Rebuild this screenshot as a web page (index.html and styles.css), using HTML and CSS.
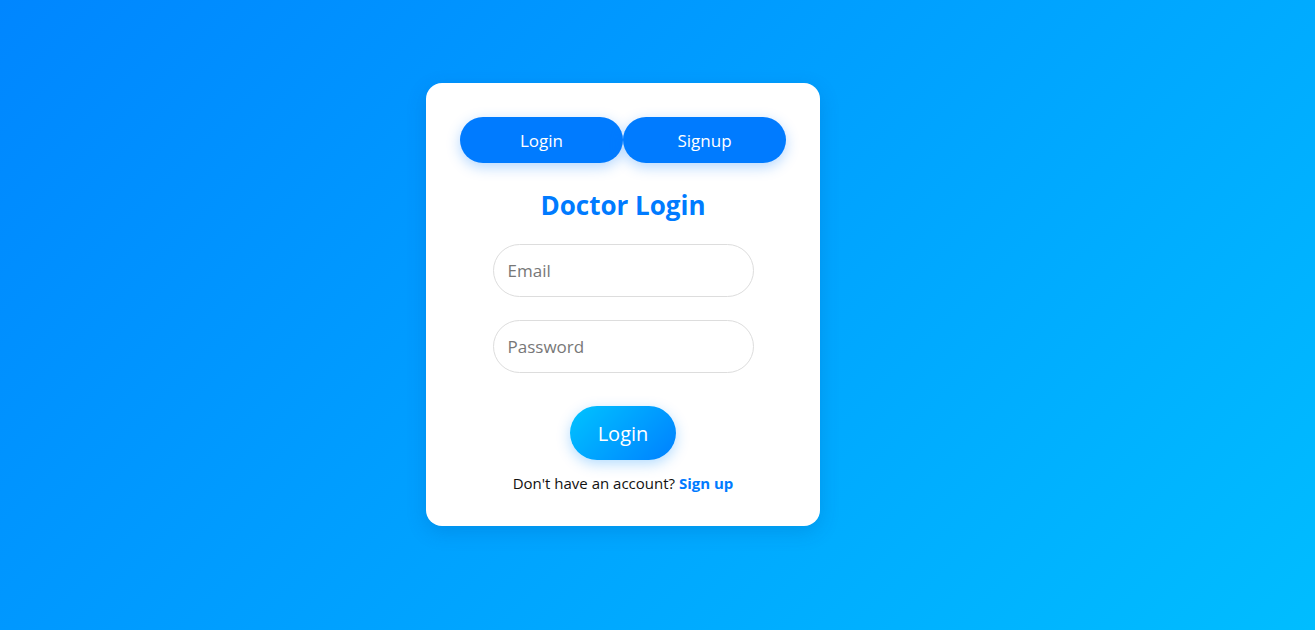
FILE: index.html
```html
<!DOCTYPE html>
<html>
<head>
<meta charset="utf-8">
<link rel="stylesheet" href="styles.css">
</head>
<body>
<div class="page">
  <div class="card">
    <div class="tabs">
      <button class="tab">Login</button>
      <button class="tab">Signup</button>
    </div>
    <h2 class="title">Doctor Login</h2>
    <form class="form">
      <input class="field" type="email" placeholder="Email">
      <input class="field" type="password" placeholder="Password">
      <button class="submit" type="button">Login</button>
    </form>
    <p class="switch">Don't have an account? <a class="link" href="#">Sign up</a></p>
  </div>
</div>
</body>
</html>
```
FILE: styles.css
```css
* { box-sizing: border-box; }
html, body { margin: 0; height: 100%; }
body {
  font-family: "Open Sans", "Noto Sans", sans-serif;
  background: linear-gradient(135deg, #0086ff, #00bdff);
}
.page {
  height: 630px;
  padding: 83px 0 0 426px;
}
.card {
  width: 394px;
  height: 443px;
  background: #fff;
  border-radius: 16px;
  box-shadow: 0 6px 20px rgba(0, 60, 140, 0.18);
  padding: 34px 34px 0;
  display: flex;
  flex-direction: column;
  align-items: center;
}
.tabs {
  display: flex;
  width: 326px;
}
.tab {
  flex: 1;
  height: 46px;
  border: none;
  border-radius: 23px;
  background: #007bff;
  color: #fff;
  font-family: inherit;
  font-size: 17px;
  box-shadow: 0 4px 14px rgba(0, 123, 255, 0.3);
}
.title {
  margin: 25px 0 0;
  color: #007bff;
  font-size: 26px;
  font-weight: 700;
  line-height: 34px;
}
.form {
  display: flex;
  flex-direction: column;
  align-items: center;
  margin-top: 22px;
}
.field {
  width: 261px;
  height: 53px;
  border: 1px solid #dddddd;
  border-radius: 27px;
  padding: 0 14px;
  font-family: inherit;
  font-size: 17px;
  color: #333;
  margin-bottom: 23px;
  outline: none;
}
.field::placeholder { color: #777; }
.submit {
  margin-top: 10px;
  width: 106px;
  height: 54px;
  border: none;
  border-radius: 27px;
  background: linear-gradient(135deg, #00c3ff, #0080ff);
  color: #fff;
  font-family: inherit;
  font-size: 20px;
  box-shadow: 0 4px 14px rgba(0, 140, 255, 0.3);
}
.switch {
  margin: 13px 0 0;
  font-size: 15px;
  color: #111;
}
.link {
  color: #007bff;
  font-weight: 700;
  text-decoration: none;
}
```
